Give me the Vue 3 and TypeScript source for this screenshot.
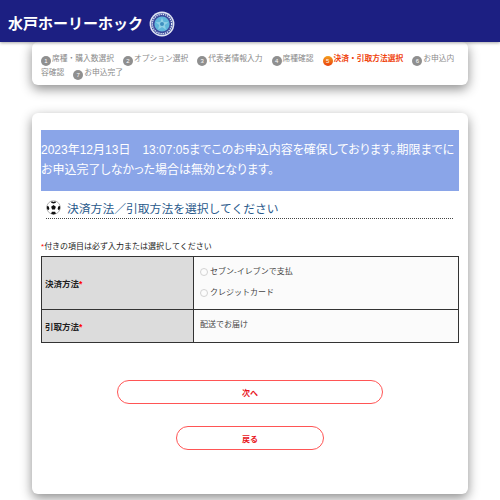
<script setup lang="ts">
const steps = [
  { no: 1, label: "席種・購入数選択" },
  { no: 2, label: "オプション選択" },
  { no: 3, label: "代表者情報入力" },
  { no: 4, label: "席種確認" },
  { no: 5, label: "決済・引取方法選択", current: true },
  { no: 6, label: "お申込内容確認" },
  { no: 7, label: "お申込完了" },
];
</script>

<template>
  <div class="page">
    <header class="site-header">
      <h1>水戸ホーリーホック</h1>
      <svg class="crest" viewBox="0 0 26 26" aria-hidden="true">
        <circle cx="13" cy="13" r="12.4" fill="#dfe4f2" />
        <circle cx="13" cy="13" r="10.8" fill="#3a4a9c" />
        <circle cx="13" cy="13" r="9.7" fill="none" stroke="#e4eaf7" stroke-width="1.3" stroke-dasharray="1.3 0.9" />
        <circle cx="13" cy="13" r="7.6" fill="#5fb6da" />
        <path d="M13 6.5l1.6 4.4 4.8.4-3.6 2.8 1.2 4.6-4-2.6-4 2.6 1.2-4.6-3.6-2.8 4.8-.4z" fill="#8fd0e6" />
        <circle cx="13" cy="13" r="2" fill="#3f8fc0" />
      </svg>
    </header>

    <main class="content">
      <nav class="card steps">
        <template v-for="step in steps" :key="step.no">
          <i class="step-no" :class="{ current: step.current }">{{ step.no }}</i>
          <span class="step-label" :class="{ current: step.current }">{{ step.label }}</span>
        </template>
      </nav>

      <section class="card form-card">
        <p class="notice">
          2023年12月13日　13:07:05までこのお申込内容を確保しております。期限までに<br />お申込完了しなかった場合は無効となります。
        </p>

        <h2 class="section-title">
          <svg class="ball" viewBox="0 0 16 16" aria-hidden="true">
            <circle cx="8" cy="8" r="7.2" fill="#fff" stroke="#777" stroke-width="0.6" />
            <path d="M8 5.4l2.5 1.8-1 2.9h-3l-1-2.9z" fill="#111" />
            <path d="M6 1.2l2 1 2-1 .6 1.6L8 3.8 5.4 2.8zM1 6.4l2 .6.6 2.6-1.4 1.2L.9 9zM15 6.4l-2 .6-.6 2.6 1.4 1.2L15.1 9zM5.4 14.6l.9-2h3.4l.9 2-2.6.8z" fill="#111" />
          </svg>
          決済方法／引取方法を選択してください
        </h2>

        <p class="required-note"><em>*</em>付きの項目は必ず入力または選択してください</p>

        <table class="form-table">
          <tbody>
            <tr class="row-pay">
              <th>決済方法<em>*</em></th>
              <td>
                <label class="radio"><input type="radio" name="pay" />セブン-イレブンで支払</label>
                <label class="radio"><input type="radio" name="pay" />クレジットカード</label>
              </td>
            </tr>
            <tr class="row-pickup">
              <th>引取方法<em>*</em></th>
              <td>配送でお届け</td>
            </tr>
          </tbody>
        </table>

        <div class="actions">
          <button type="button" class="btn next">次へ</button>
          <button type="button" class="btn back">戻る</button>
        </div>
      </section>
    </main>
  </div>
</template>

<style>
html,
body {
  margin: 0;
  background: #fff;
}
</style>

<style scoped>
.page {
  height: 500px;
  overflow: hidden;
  font-family: "Liberation Sans", "Noto Sans CJK JP", sans-serif;
  color: #222;
}

.site-header {
  position: relative;
  z-index: 1;
  display: flex;
  align-items: center;
  gap: 6px;
  height: 42px;
  padding: 6px 0 0 8px;
  box-sizing: border-box;
  background: #1c1f82;
  box-shadow: 0 1px 3px rgb(0 0 0 / 35%);
}

.site-header h1 {
  margin: 0;
  padding-bottom: 3px;
  color: #fff;
  font-size: 15px;
  font-weight: 700;
}

.crest {
  width: 26px;
  height: 26px;
}

.content {
  display: flex;
  flex-direction: column;
  gap: 28px;
  padding: 0 32px;
}

.card {
  background: #fff;
  border-radius: 6px;
  box-shadow: 0 4px 12px rgb(0 0 0 / 45%);
}

.steps {
  height: 43px;
  padding: 10px 10px 0 9px;
  box-sizing: border-box;
  font-size: 7.75px;
  line-height: 13px;
  color: #8a8a8a;
}

.step-label {
  margin-right: 9px;
}

.step-label.current {
  color: #f0440f;
  font-weight: 700;
}

.step-no {
  display: inline-block;
  width: 10px;
  height: 10px;
  margin-right: 1px;
  border-radius: 50%;
  background: #8f8f8f;
  color: #fff;
  font-size: 6px;
  font-style: normal;
  line-height: 10px;
  text-align: center;
  vertical-align: -2px;
}

.step-no.current {
  background: linear-gradient(#f3a01e, #ea3f0c);
}

.form-card {
  height: 381px;
  padding: 17px 9px 0;
  box-sizing: border-box;
}

.notice {
  height: 61px;
  margin: 0;
  padding: 10px 0 0;
  box-sizing: border-box;
  background: #8aa5e8;
  color: #fff;
  font-size: 12px;
  font-feature-settings: "palt";
  line-height: 20px;
  white-space: nowrap;
}

.section-title {
  display: flex;
  align-items: center;
  gap: 6px;
  height: 22px;
  margin: 0 6px 0 5px;
  padding-top: 5px;
  border-bottom: 1px dotted #444;
  color: #2a5a8c;
  font-size: 11.8px;
  font-weight: 400;
}

.ball {
  width: 15px;
  height: 15px;
}

.required-note {
  margin: 22px 0 4px;
  font-size: 8px;
  line-height: 11px;
}

em {
  color: #f00;
  font-style: normal;
}

.form-table {
  width: 100%;
  border-collapse: collapse;
  font-size: 8px;
}

.form-table th,
.form-table td {
  padding: 0 3px;
  border: 1px solid #333;
  text-align: left;
}

.form-table th {
  width: 145px;
  background: #dcdcdc;
  font-size: 8.5px;
  font-weight: 700;
}

.form-table td {
  padding-left: 6px;
  background: #fbfbfb;
  color: #444;
}

.row-pay {
  height: 53px;
}

.row-pay td {
  padding-bottom: 4px;
}

.row-pickup {
  height: 33px;
}

.row-pickup td {
  padding-bottom: 5px;
}

.radio {
  display: flex;
  align-items: center;
  height: 21px;
}

.radio input {
  width: 8px;
  height: 8px;
  margin: 2px 2px 0 0;
  opacity: 0.3;
}

.actions {
  display: flex;
  flex-direction: column;
  align-items: center;
  gap: 22px;
  margin-top: 37px;
}

.btn {
  height: 24px;
  padding: 0;
  background: #fff;
  border: 1px solid #f55;
  border-radius: 12px;
  color: #e8141c;
  font: 700 8px "Liberation Sans", "Noto Sans CJK JP", sans-serif;
}

.next {
  width: 266px;
}

.back {
  width: 148px;
}
</style>
